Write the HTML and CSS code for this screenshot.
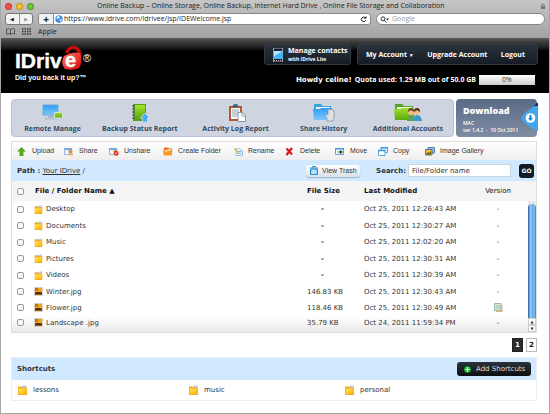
FILE: index.html
```html
<!DOCTYPE html>
<html lang="en">
<head>
<meta charset="utf-8">
<title>Online Backup</title>
<link rel="stylesheet" href="styles.css">
</head>
<body>
<svg class="defs" aria-hidden="true">
  <defs>
    <linearGradient id="gold" x1="0" y1="0" x2="1" y2="1"><stop offset="0" stop-color="#ffe95a"/><stop offset="1" stop-color="#fdb000"/></linearGradient>
    <linearGradient id="blue" x1="0" y1="0" x2="0" y2="1"><stop offset="0" stop-color="#2f9df5"/><stop offset="1" stop-color="#7cc8fb"/></linearGradient>
    <linearGradient id="green" x1="0" y1="0" x2="0" y2="1"><stop offset="0" stop-color="#a4e02c"/><stop offset="1" stop-color="#58ab10"/></linearGradient>
    <linearGradient id="red" x1="0" y1="0" x2="1" y2="1"><stop offset="0" stop-color="#ff7a6a"/><stop offset="1" stop-color="#d80606"/></linearGradient>
  </defs>
  <symbol id="folder" viewBox="0 0 9 10"><path d="M4 1.500 5 .5h3.500V4H4z" fill="#b9cdea"/><path d="M0 1.500h3.500l1 1H9V10H0z" fill="#f5a623"/><path d="M.8 3.500h7.600v5.700H.8z" fill="url(#gold)"/></symbol>
  <symbol id="image" viewBox="0 0 9 9"><path d="M0 0h9v9H0z" fill="#d5d2cc"/><path d="M1 1h7v7H1z" fill="#f0a51a"/><path d="M1 5.500 4 5l4 .4V7.500H1z" fill="#4a2504"/><path d="M1 1h3v3H1z" fill="#c87510"/></symbol>
  <symbol id="person" viewBox="0 0 11 9"><path d="M.5 1.500h8v6.500h-8z" fill="#eaf3fd" stroke="#86aede"/><path d="M.5 1h8v1.500h-8z" fill="#5d9be4"/><circle cx="7" cy="4.500" r="2.200" fill="#dd9248"/><path d="M4 9c0-3 6.500-3 6.500 0z" fill="#e3a568"/></symbol>
</svg>

<div class="window">
  <div class="chrome">
    <div class="titlebar">
      <span class="lights"><i class="light light-red"></i><i class="light light-yellow"></i><i class="light light-green"></i></span>
      <span class="title">Online Backup – Online Storage, Online Backup, Internet Hard Drive , Online File Storage and Collaboration</span>
      <svg class="lock" viewBox="0 0 6 7"><path d="M1.500 3V2q1.500-2 3 0v1" fill="none" stroke="#777"/><path d="M1 3h4v3H1z" fill="#777"/></svg>
    </div>
    <div class="addressbar">
      <span class="history"><button aria-label="Back">◀</button><button class="off" aria-label="Forward">▶</button></span>
      <span class="location">
        <button class="plus" aria-label="Add bookmark">+</button>
        <svg class="globe" viewBox="0 0 8 8"><circle cx="4" cy="4" r="3.700" fill="#3d8be6"/><path d="M2 1.500 4 1l1 1.500L3 4 1.500 3.500zM4.500 4.500 7 4 5.500 7z" fill="#e4f2ff"/></svg>
        <input class="url" aria-label="Address" value="https://www.idrive.com/idrivee/jsp/IDEWelcome.jsp">
        <svg class="reload" viewBox="0 0 7 7"><path d="M5.500 2A2.300 2.300 0 1 0 5.800 4.200" fill="none" stroke="#222"/><path d="M3.500 2.500h3V0z" fill="#222"/></svg>
      </span>
      <label class="google"><svg viewBox="0 0 9 7"><circle cx="3" cy="2.800" r="2" fill="none" stroke="#333"/><path d="m4.300 4.300 2 2.200" stroke="#333"/><path d="M6 2.500h3L7.500 4.500z" fill="#333"/></svg><input placeholder="Google" aria-label="Google search"></label>
    </div>
    <div class="bookmarks">
      <svg class="book" viewBox="0 0 9 7"><path d="M4.500 1.500Q2.500-.3.500 1v5Q3 5 4.500 6.200 6 5 8.500 6V1Q6.500-.3 4.500 1.500v4.700" fill="none" stroke="#444" stroke-width=".8"/></svg>
      <svg class="dots" viewBox="0 0 9 7"><path d="M0 1h9M0 3.500h9M0 6h9" stroke="#333" stroke-width="1.500" stroke-dasharray="1.500 1"/></svg>
      <a href="#">Apple</a>
    </div>
  </div>

  <header class="header">
    <svg class="logo" viewBox="0 0 80 36" role="img" aria-label="IDrive">
      <path d="M52 7C54-1 65-1 65 11" fill="none" stroke="#c40d0d" stroke-width="3.500"/>
      <path d="M49 10q8-5 16-3 3 10-1 15-7 3-14 1-5-5-1-13z" fill="url(#red)"/>
      <text x="0" y="22" class="logo-name">IDriv</text><text x="50" y="21" class="logo-e">e</text><text x="68" y="16" class="logo-reg">®</text>
      <text x="0" y="34" class="logo-tag">Did you back it up?™</text>
    </svg>
    <div class="account">
      <div class="menus">
        <a class="contacts" href="#"><svg viewBox="0 0 12 14"><path d="M.5 0h9v14h-9z" fill="#172333" stroke="#8c9eaf"/><path d="M1 3h9v8H1z" fill="#45b4f1"/><path d="M1 3h9L1 8z" fill="#bde6fc"/><path d="M1 12.500h8" stroke="#dba78f" stroke-dasharray="1 1"/></svg><span>Manage contacts<small>with IDrive Lite</small></span></a>
        <nav class="links"><a href="#">My Account <i>▼</i></a><a href="#">Upgrade Account</a><a href="#">Logout</a></nav>
      </div>
      <div class="quota"><strong>Howdy celine!</strong><span>Quota used: 1.29 MB out of 50.0 GB</span><span class="meter">0%</span></div>
    </div>
  </header>

  <main class="page">
    <div class="top">
      <nav class="features">
        <a href="#"><svg viewBox="0 0 22 18"><path d="M1 1h15v10H1z" fill="url(#blue)" stroke="#68a7dd"/><path d="M6 12h6v2H6zM3 14.500h12v1H3z" fill="#a8b6c8"/><path d="M12.500 8.500h8v5.500h-8z" fill="url(#green)" stroke="#d5e2d2"/><path d="M11 16h10" stroke="#c5ccd4"/></svg>Remote Manage</a>
        <a href="#"><svg viewBox="0 0 22 18"><path d="M4 0h13v17H4z" fill="#5a9e19"/><path d="M6 1h10v14H6z" fill="url(#green)"/><path d="M3 2h3M3 5h3M3 8h3M3 11h3M3 14h3" stroke="#47505b"/><path d="m16 9 4.500 5h-2v4h-5v-4h-2z" fill="#4aaaf0" stroke="#d8edff" stroke-width=".7"/></svg>Backup Status Report</a>
        <a href="#"><svg viewBox="0 0 22 18"><path d="M4 2h13v15H4z" fill="#b2572e"/><path d="M6 4h9v11H6z" fill="#f7fafc"/><path d="M7.500 3q0-3 3-3t3 3z" fill="#43617d"/><path d="M7 6h7M7 8h7M7 10h7M7 12h5" stroke="#8ea6ba"/><path d="M13 8.500h4.500l3 3v6H13z" fill="#fff" stroke="#8a99a7"/><path d="M17 9v3h3" fill="none" stroke="#8a99a7"/></svg>Activity Log Report</a>
        <a href="#"><svg viewBox="0 0 22 18"><path d="M1 0h7l2 2h8v4H1z" fill="#38a5dd"/><path d="M3 3h14v6H3z" fill="#eef6fb"/><path d="M0 5h6l2-1h11v12H1z" fill="url(#blue)"/><path d="M14 17v-3l-2-3 1-1 2 1V6l1-1 1 1 1-1 1 1 1 0 1 2v6l-1 3z" fill="#dce1e6" stroke="#85919d" stroke-width=".7"/></svg>Share History</a>
        <a href="#"><svg class="wide" viewBox="0 0 28 18"><path d="M1 0h7l2 2h9v4H1z" fill="#55a322"/><path d="M3 3h15v6H3z" fill="#f2f8ec"/><path d="M0 5h6l2-1h12v12H1z" fill="url(#green)"/><circle cx="17" cy="8" r="3" fill="#f1bd85"/><path d="M14 8q0-4 3-4t3 4l-3-2z" fill="#6c3b18"/><path d="M13 17q0-6 4-6t5 6z" fill="#5ba54b"/><circle cx="23" cy="8" r="3" fill="#f1bd85"/><path d="M20 8q0-4 3-4t3 4l-3-2z" fill="#492b19"/><path d="M19 17q0-6 4-6t5 6z" fill="#3b98cf"/></svg>Additional Accounts</a>
      </nav>
      <a class="download" href="#"><strong>Download</strong><span>MAC</span><span>ver 1.4.2&nbsp; - &nbsp;10 Oct 2011</span>
        <svg viewBox="0 0 17 30"><path d="M17 1v27Q3 22 0 15 3 9 17 1z" fill="#43a5ed"/><path d="m13 3 4-4v4z" fill="#0b2c6b"/><circle cx="9.500" cy="15" r="4.800" fill="#fff"/><path d="M8.500 12h2v3H12l-2.500 3L7 15h1.500z" fill="#1784d7"/></svg></a>
    </div>

    <section class="files">
      <div class="toolbar">
        <button><svg viewBox="0 0 10 9"><path d="m4.500 0 4.500 4.500H6.500V9H2.500V4.500H0z" fill="#55ab17"/></svg>Upload</button>
        <button><svg viewBox="0 0 11 9"><use href="#person"/></svg>Share</button>
        <button><svg viewBox="0 0 11 9"><use href="#person"/><circle cx="8" cy="6.500" r="2.600" fill="#e3211b"/><path d="m7 5.500 2 2m0-2-2 2" stroke="#fff" stroke-width=".8"/></svg>Unshare</button>
        <button><svg viewBox="0 0 11 9"><path d="M1 0h4l1 1h4v4H1z" fill="#ee6d16"/><path d="M0 4q6 0 10-2v7H1z" fill="#fa9825"/><path d="M2 3q4 0 7-2v2L2 5z" fill="#ffe3af"/></svg>Create Folder</button>
        <button><svg viewBox="0 0 10 10"><path d="M3 2h4l3 2v5.500H3z" fill="#f8fcff" stroke="#75a8d4" stroke-width=".8"/><path d="m0 2 2-1 4 5-1 2z" fill="#e7bc51"/><path d="M5 5h4M5 7h4" stroke="#4c91d2" stroke-width=".8"/></svg>Rename</button>
        <button><svg viewBox="0 0 9 9"><path d="m1 1.500 5.500 6M6.500 1 1 8" stroke="#d41a19" stroke-width="2.200"/></svg>Delete</button>
        <button><svg viewBox="0 0 10 9"><path d="M.5 1.500h8v6h-8z" fill="#eef7ff" stroke="#6ba2d5"/><path d="M0 1h9v1.500H0z" fill="#4796e0"/><path d="M3 4.500h2V3l3 2-3 2V5.500H3z" fill="#174c1e"/></svg>Move</button>
        <button><svg viewBox="0 0 10 9"><path d="M3 .5h6.500v5H3z" fill="#d9eefd" stroke="#58a7dc"/><path d="M.5 3.500H7v5H.5z" fill="#fff" stroke="#58a7dc"/><path d="M0 3.500h7.500M2.500.8H10" stroke="#3b9be0" stroke-width="1.500"/></svg>Copy</button>
        <button><svg viewBox="0 0 10 9"><path d="M3 .5h6.500v5.500H3z" fill="#83c1ef" stroke="#6482a0"/><path d="M.5 2.500H7v5.500H.5z" fill="#f5c129" stroke="#597388"/><path d="m1 7 2-2 1 1 2-2v3.500H1z" fill="#6b6118"/></svg>Image Gallery</button>
      </div>
      <form class="pathbar">
        <span class="path"><b>Path :</b> <a href="#">Your IDrive</a> /</span>
        <button class="trash" type="button"><svg viewBox="0 0 8 9"><path d="M0 2h8M2.500 1.500v-1h3v1" fill="none" stroke="#298fd4"/><path d="M.5 3h7v5.500h-7z" fill="#8fcdf3" stroke="#298fd4"/><path d="M3 4v4M5 4v4" stroke="#fff" stroke-width=".8"/></svg>View Trash</button>
        <label for="search">Search:</label>
        <input id="search" value="File/Folder name">
        <button class="go" type="button">GO</button>
      </form>
      <div class="listing">
        <table>
          <colgroup><col class="c-check"><col><col class="c-size"><col class="c-date"><col class="c-version"></colgroup>
          <thead><tr><th><input type="checkbox" aria-label="Select all"></th><th>File / Folder Name <i>▲</i></th><th>File Size</th><th>Last Modified</th><th class="mid">Version</th></tr></thead>
          <tbody>
            <tr><td><input type="checkbox" aria-label="Desktop"></td><td><svg viewBox="0 0 9 10"><use href="#folder"/></svg>Desktop</td><td class="none">-</td><td>Oct 25, 2011 12:26:43 AM</td><td class="mid">-</td></tr>
            <tr><td><input type="checkbox" aria-label="Documents"></td><td><svg viewBox="0 0 9 10"><use href="#folder"/></svg>Documents</td><td class="none">-</td><td>Oct 25, 2011 12:30:27 AM</td><td class="mid">-</td></tr>
            <tr><td><input type="checkbox" aria-label="Music"></td><td><svg viewBox="0 0 9 10"><use href="#folder"/></svg>Music</td><td class="none">-</td><td>Oct 25, 2011 12:02:20 AM</td><td class="mid">-</td></tr>
            <tr><td><input type="checkbox" aria-label="Pictures"></td><td><svg viewBox="0 0 9 10"><use href="#folder"/></svg>Pictures</td><td class="none">-</td><td>Oct 25, 2011 12:30:31 AM</td><td class="mid">-</td></tr>
            <tr><td><input type="checkbox" aria-label="Videos"></td><td><svg viewBox="0 0 9 10"><use href="#folder"/></svg>Videos</td><td class="none">-</td><td>Oct 25, 2011 12:30:39 AM</td><td class="mid">-</td></tr>
            <tr><td><input type="checkbox" aria-label="Winter.jpg"></td><td><svg viewBox="0 0 9 9"><use href="#image"/></svg>Winter.jpg</td><td>146.83 KB</td><td>Oct 25, 2011 12:30:43 AM</td><td class="mid">-</td></tr>
            <tr class="short"><td><input type="checkbox" aria-label="Flower.jpg"></td><td><svg viewBox="0 0 9 9"><use href="#image"/></svg>Flower.jpg</td><td>118.46 KB</td><td>Oct 25, 2011 12:30:49 AM</td><td class="mid"><svg class="versions" viewBox="0 0 9 9"><path d="M2 2h6.500v7H2z" fill="#d8b976"/><path d="M.5.500h6.500v7H.5z" fill="#d3e3d3" stroke="#9eb8ad"/><path d="M2 3h4M2 5h4" stroke="#94b3a9" stroke-width=".7"/></svg></td></tr>
            <tr class="short"><td><input type="checkbox" aria-label="Landscape .jpg"></td><td><svg viewBox="0 0 9 9"><use href="#image"/></svg>Landscape .jpg</td><td>35.79 KB</td><td>Oct 24, 2011 11:59:34 PM</td><td class="mid">-</td></tr>
          </tbody>
        </table>
        <div class="scrollbar"><span class="thumb"></span><span class="arrow">▲</span><span class="arrow">▼</span></div>
      </div>
    </section>

    <nav class="pager"><a class="current" href="#">1</a><a href="#">2</a></nav>

    <section class="shortcuts">
      <div class="shortcuts-head"><h2>Shortcuts</h2><button><svg viewBox="0 0 8 8"><circle cx="4" cy="4" r="3.800" fill="#16b52a"/><path d="M4 1.500v5M1.500 4h5" stroke="#fff" stroke-width="1.300"/></svg>Add Shortcuts</button></div>
      <div class="shortcut-list">
        <a href="#"><svg viewBox="0 0 9 10"><use href="#folder"/></svg>lessons</a>
        <a href="#"><svg viewBox="0 0 9 10"><use href="#folder"/></svg>music</a>
        <a href="#"><svg viewBox="0 0 9 10"><use href="#folder"/></svg>personal</a>
      </div>
    </section>
  </main>
</div>
</body>
</html>
```
FILE: styles.css
```css
* { box-sizing: border-box; }
body { margin: 0; background: #fff; color: #333; font: 7px/10px "DejaVu Sans", Verdana, sans-serif; }
a { color: inherit; text-decoration: none; }
i { font-style: normal; }
svg { display: block; flex: none; }
button, input { margin: 0; padding: 0; border: 0; background: none; color: inherit; font: inherit; }
button { display: flex; align-items: center; white-space: nowrap; }
input[type="checkbox"] { display: block; width: 7px; height: 7px; appearance: none; background: #fafafa; border: 1px solid #999; border-radius: 2px; }
.defs { position: absolute; width: 0; height: 0; }

.window { min-height: 100vh; border: 1px solid #a6a6a6; border-top: 0; }

/* Browser chrome */
.chrome { padding-bottom: 1px; background: linear-gradient(#c6c6c6, #a3a3a3); font: 7px/10px "Open Sans", sans-serif; color: #1c1c1c; }
.titlebar { display: flex; align-items: center; height: 12px; padding: 0 3px 0 4px; }
.lights { display: flex; gap: 4px; width: 92px; }
.light { width: 7px; height: 7px; border-radius: 50%; box-shadow: inset 0 0 1px 1px rgba(0, 0, 0, .25); }
.light-red { background: #ff5043; }
.light-yellow { background: #ffc52f; }
.light-green { background: #69cb3d; }
.title { flex: 1; white-space: nowrap; }
.lock { width: 6px; height: 7px; }
.addressbar { display: flex; height: 14px; padding: 1px 4px 1px 4px; }
.history { display: flex; width: 28px; margin-right: 5px; border: 1px solid #777; border-radius: 3px; background: #f3f3f3; }
.history button { flex: 1; justify-content: center; font-size: 5px; }
.history button + button { border-left: 1px solid #999; }
.off { color: #999; }
.location { display: flex; flex: 1; align-items: center; margin-right: 5px; padding-right: 3px; border: 1px solid #888; border-radius: 3px; background: #fff; }
.plus { width: 15px; height: 10px; justify-content: center; border-right: 1px solid #888; border-radius: 2px 0 0 2px; background: #f0f0f0; font-size: 10px; font-weight: bold; }
.globe { width: 8px; height: 8px; margin: 0 1px; }
.url { flex: 1; min-width: 0; }
.reload { width: 7px; height: 7px; }
.google { display: flex; align-items: center; width: 169px; padding-left: 3px; border: 1px solid #888; border-radius: 6px; background: #fff; }
.google svg { width: 9px; height: 7px; margin-right: 3px; }
.google input { flex: 1; min-width: 0; }
.google input::placeholder { color: #999; }
.bookmarks { display: flex; align-items: center; height: 11px; padding-left: 5px; }
.book, .dots { width: 9px; height: 7px; margin-right: 7px; }

/* Site header */
.header { display: flex; justify-content: space-between; height: 55px; padding: 6px 11px 0 14px; background: linear-gradient(#5d5d5d, #3b3b3b 4px, #222 9px, #000 13px); color: #fff; }
.logo { width: 80px; height: 36px; margin-top: 2px; overflow: visible; }
.logo text { fill: #fff; font-family: "Liberation Sans", Arial, sans-serif; font-weight: bold; }
.logo .logo-name { font-size: 21px; stroke: #fff; stroke-width: .4px; }
.logo .logo-e { font-size: 20px; stroke: #fff; stroke-width: .4px; }
.logo .logo-reg { font-size: 11px; font-weight: normal; }
.logo .logo-tag { font-size: 7px; }
.account { display: flex; flex-direction: column; gap: 10px; font-family: "Open Sans", sans-serif; font-weight: bold; }
.menus { display: flex; justify-content: flex-end; gap: 6px; }
.contacts, .links { display: flex; align-items: center; height: 21px; border: 1px solid #323a42; border-radius: 3px; background: linear-gradient(#2a333d, #151c24); font-size: 7px; white-space: nowrap; }
.contacts { width: 87px; gap: 3px; padding-left: 8px; line-height: 8px; }
.contacts svg { width: 12px; height: 14px; }
.contacts small { display: block; font-size: 5px; }
.links { width: 181px; justify-content: space-between; padding: 0 12px 0 8px; }
.links i { font-size: 5px; }
.quota { display: flex; align-items: center; justify-content: flex-end; gap: 3px; padding-right: 3px; white-space: nowrap; }
.quota strong { font-family: "DejaVu Sans", sans-serif; }
.meter { width: 56px; height: 10px; background: linear-gradient(#fff, #ccc); color: #333; font-weight: normal; text-align: center; }

/* Page */
.page { padding: 6px 12px 12px 10px; }
.top { display: flex; gap: 2px; margin-bottom: 4px; }
.features { display: grid; flex: 1; grid-template-columns: 81fr 93fr 98fr 78fr 90fr; padding: 4px 0 0; border: 1px solid #b7c2d2; border-radius: 4px; background: #ced5e1; color: #34495f; font: bold 7px/12px "Open Sans", sans-serif; }
.features a { display: flex; flex-direction: column; align-items: center; gap: 1px; white-space: nowrap; }
.features svg { width: 22px; height: 18px; }
.features .wide { width: 28px; }
.download { position: relative; display: block; width: 81px; height: 38px; padding: 6px 0 0 7px; border-radius: 4px; background: linear-gradient(#5b6a85, #7f8da4); color: #fff; font: 600 5px/7px "Open Sans", sans-serif; white-space: nowrap; }
.download strong { display: block; margin-bottom: 3px; font-size: 9px; line-height: 12px; }
.download span { display: block; }
.download svg { position: absolute; right: -1px; top: 4px; width: 17px; height: 30px; }

.files { border: 1px solid #ddd; }
.toolbar { display: grid; grid-template-columns: 47px 45px 54px 70px 52px 50px 43px 47px 1fr; align-items: center; height: 18px; padding-left: 5px; background: linear-gradient(#fff, #eee); color: #333; font: 7px/10px "Liberation Sans", Arial, sans-serif; }
.toolbar svg { width: 10px; height: 9px; margin-right: 5px; }
.pathbar { display: flex; align-items: center; height: 21px; padding: 0 2px 0 5px; background: #d1e9fe; }
.path { flex: 1; }
.path a { text-decoration: underline; }
.trash { height: 12px; width: 54px; margin-right: 16px; padding-left: 4px; border-radius: 3px; background: linear-gradient(#fff, #d9e0e8); box-shadow: 0 1px 1px #9fb3c5; font: 7px/10px "Liberation Sans", sans-serif; }
.trash svg { width: 8px; height: 9px; margin-right: 4px; }
.pathbar label { margin-right: 2px; font-weight: bold; }
#search { width: 103px; height: 13px; margin-right: 8px; padding-left: 3px; border: 1px solid #c5d5e2; background: #fff; }
.go { justify-content: center; width: 15px; height: 14px; border-radius: 3px; background: #111922; color: #fff; font-size: 6px; font-weight: bold; }

.listing { position: relative; padding-bottom: 2px; background: linear-gradient(#fff 136px, #e9e9e9); }
table { width: 100%; table-layout: fixed; border-collapse: collapse; }
.c-check { width: 22px; }
.c-size { width: 57px; }
.c-date { width: 106px; }
.c-version { width: 66px; }
th, td { padding: 0; text-align: left; font-weight: normal; white-space: nowrap; }
th { height: 20px; background: #f4f4f4; color: #111; font-weight: bold; }
th:last-child { font-weight: normal; }
th:nth-child(2) { padding-left: 1px; }
th:first-child, td:first-child { padding-left: 5px; }
td { height: 16px; }
tr:nth-child(even) td { height: 17px; }
.short td, tr.short:nth-child(even) td { height: 15px; }
td svg { display: inline-block; width: 9px; height: 9px; margin-right: 3px; vertical-align: middle; }
td .versions { margin: 0; }
.none { padding-left: 14px; font-weight: bold; }
.mid { text-align: center; }
.mid:last-child { padding-right: 10px; }
.scrollbar { position: absolute; right: 0; top: 20px; bottom: 0; display: flex; flex-direction: column; width: 8px; background: #e8e8e8; }
.thumb { flex: 1; margin-top: 3px; border-radius: 4px 4px 0 0; background: linear-gradient(90deg, #2a5f9e, #9fd1fb 35%, #5aa5ea 60%, #7ec1fa 80%, #356db0); }
.arrow { height: 7px; border: 1px solid #ccc; background: #fff; font-size: 4px; line-height: 6px; text-align: center; }

.pager { display: flex; justify-content: flex-end; gap: 3px; margin: 5px 0; }
.pager a { width: 11px; height: 14px; border: 1px solid #bbb; font-weight: bold; line-height: 12px; text-align: center; color: #111; }
.pager .current { border-color: #222; background: #2b2b2b; color: #fff; }

.shortcuts { border: 1px solid #eee; }
.shortcuts-head { display: flex; align-items: center; justify-content: space-between; height: 22px; padding: 0 5px; background: #d1e9fe; }
h2 { margin: 0; font-size: 7px; line-height: 10px; }
.shortcuts-head button { width: 74px; height: 14px; padding-left: 7px; border-radius: 3px; background: linear-gradient(#2a333b, #0b0f13); color: #ddd; }
.shortcuts-head button svg { width: 7px; height: 7px; margin-right: 5px; }
.shortcut-list { display: grid; grid-template-columns: 171px 156px 1fr; height: 20px; padding-left: 6px; }
.shortcut-list a { display: flex; align-items: center; gap: 6px; }
.shortcut-list svg { width: 9px; height: 10px; }
```
